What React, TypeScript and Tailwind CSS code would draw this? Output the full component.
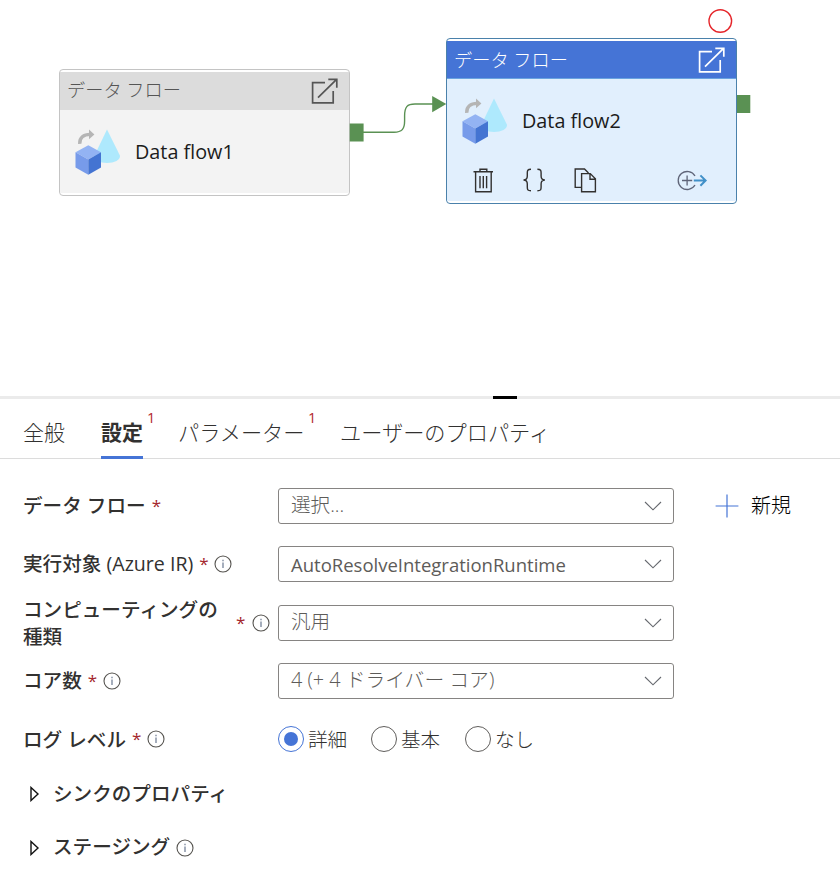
import React from "react";

const DataFlowIcon = () => (
  <svg viewBox="75 129 46 46" className="h-[46px] w-[46px] shrink-0">
    <path d="M107 129.6 L119.9 155.5 C121 160 114 163 107 163 C100 163 93 160 94.5 155.5 Z" fill="#aee9fd" />
    <path d="M88.3 145.2 L101 152.2 L88.3 159.6 L75.5 152.2 Z" fill="#93b3f3" />
    <path d="M75.5 152.2 L88.3 159.6 V174.7 L75.5 167.5 Z" fill="#779bea" />
    <path d="M101 152.2 L88.3 159.6 V174.7 L101 167.5 Z" fill="#4474d2" />
    <path d="M79.7 143.8 C79.4 137.5 83.5 134.3 90.5 134.4" fill="none" stroke="#b5b5b5" strokeWidth="3.4" />
    <path d="M89 129.5 L94.4 134.4 L89 139.3 Z" fill="#b5b5b5" />
  </svg>
);

const OpenIcon = () => (
  <svg viewBox="311 78 28 27" className="h-[27px] w-[28px]" fill="none" stroke="currentColor" strokeWidth="1.7">
    <path d="M325 82.7 H312.6 V102.8 H333.2 V91" />
    <path d="M318 97.7 L336.6 79.4 M328.3 79.3 H336.8 V87.7" />
  </svg>
);

const InfoIcon = () => (
  <svg viewBox="0 0 18 18" className="h-[18px] w-[18px] shrink-0" fill="none">
    <circle cx="9" cy="9" r="8" stroke="#55534f" strokeWidth="1.1" />
    <path d="M9 7.4 V13" stroke="#7f8ba0" strokeWidth="1.4" />
    <path d="M9 4.8 V6.2" stroke="#7f8ba0" strokeWidth="1.4" />
  </svg>
);

const Chevron = () => (
  <svg viewBox="0 0 18 10" className="h-[10px] w-[18px]" fill="none" stroke="#66696f" strokeWidth="1.1">
    <path d="M1 1 L9 8.8 L17 1" />
  </svg>
);

const Star = ({ className = "" }: { className?: string }) => (
  <span className={"w-[9px] text-[17px] font-normal leading-[26px] text-[#a4262c] " + className}>*</span>
);

const Select = ({ text, className = "" }: { text: string; className?: string }) => (
  <div className="flex h-[36px] w-[396px] items-center justify-between rounded-[3px] border border-[#868482] pr-[11px] pl-[12px]">
    <span className={"whitespace-nowrap text-[#5d5b59] " + className}>{text}</span>
    <Chevron />
  </div>
);

const Row = ({ label, children }: { label: React.ReactNode; children: React.ReactNode }) => (
  <div className="flex h-[58.4px] items-center">
    <div className="flex w-[255px] shrink-0 items-center whitespace-nowrap text-[19.6px] font-medium">{label}</div>
    {children}
  </div>
);

const Radio = ({ text, on = false, className = "" }: { text: string; on?: boolean; className?: string }) => (
  <div className={"flex items-center gap-[4px] " + className}>
    <span
      className={
        "flex h-[26px] w-[26px] items-center justify-center rounded-full border " +
        (on ? "border-[#4574d6]" : "border-[#605e5c]")
      }
    >
      {on && <span className="h-[14px] w-[14px] rounded-full bg-[#4574d6]" />}
    </span>
    <span className="pt-[1px] text-[19.6px] font-light">{text}</span>
  </div>
);

const Section = ({ text, info = false }: { text: string; info?: boolean }) => (
  <div className="flex h-[53.5px] items-center pl-[6px]">
    <svg viewBox="0 0 12 16" className="h-[16px] w-[12px]" fill="none" stroke="#111" strokeWidth="1.4">
      <path d="M2 1.5 L9 8 L2 14.5 Z" />
    </svg>
    <span className="ml-[12px] pb-[2px] text-[19.6px] font-medium">{text}</span>
    {info && (
      <span className="ml-[6px]">
        <InfoIcon />
      </span>
    )}
  </div>
);

export default function App() {
  return (
    <div className="flex h-[875px] w-[840px] flex-col overflow-hidden bg-white font-['Open_Sans','Noto_Sans_CJK_JP',sans-serif] text-[19.6px] text-[#323130]">
      <div className="relative h-[396px] shrink-0">
        <div className="absolute top-[69px] left-[59px] flex h-[127px] w-[291px] flex-col rounded-[4px] border-[1.5px] border-[#c4c4c4] bg-white py-[2px]">
          <div className="flex h-[38px] items-center justify-between bg-[#dcdcdc] pr-[10px] pl-[7px] text-[#555]">
            <span className="text-[18.2px] font-light">データ フロー</span>
            <OpenIcon />
          </div>
          <div className="flex grow items-center bg-[#f3f3f3] pl-[15px] text-[#1b1b1b]">
            <DataFlowIcon />
            <span className="ml-[14px] pt-[1px] text-[19.8px]">Data flow1</span>
          </div>
        </div>

        <div className="absolute top-[38px] left-[446px] flex h-[166px] w-[291px] flex-col rounded-[4px] border-[1.5px] border-[#4a81ab] bg-white py-[2px]">
          <div className="flex h-[38px] items-center justify-between border-b border-[#6aa3e0] bg-[#4574d6] pt-[1px] pr-[10px] pl-[7px] text-white">
            <span className="pt-[1px] text-[18.2px] font-light">データ フロー</span>
            <OpenIcon />
          </div>
          <div className="flex grow flex-col bg-[#e1effd] text-[#1b1b1b]">
            <div className="flex h-[84px] items-center pb-[1px] pl-[15px]">
              <DataFlowIcon />
              <span className="ml-[14px] text-[19.8px]">Data flow2</span>
            </div>
            <svg viewBox="447 163 289 34" className="h-[34px] w-[289px]" fill="none" stroke="#323130" strokeWidth="1.4">
              <path d="M473.5 171.8 H493 M480 171.5 V169.3 H486.8 V171.5 M475.6 172 V191.8 H491.2 V172 M480 176 V188.3 M483.3 176 V188.3 M486.6 176 V188.3" />
              <path d="M531 169.3 C527.5 169.3 527.3 170.5 527.3 173 V176 C527.3 178.5 526.5 180 523.5 180 C526.5 180 527.3 181.5 527.3 184 V187 C527.3 189.7 527.5 190.8 531 190.8 M537.4 169.3 C540.9 169.3 541.1 170.5 541.1 173 V176 C541.1 178.5 541.9 180 544.9 180 C541.9 180 541.1 181.5 541.1 184 V187 C541.1 189.7 540.9 190.8 537.4 190.8" />
              <path d="M581 187.4 H575.2 V169 H584.5 L588.5 173 M581.6 173.6 H590.3 L595.4 178.8 V191.8 H581.6 Z M590 173.8 V179.2 H595.2" />
              <path d="M695 176 A9 9 0 1 0 695 185 M682 180.5 H692.2 M687.1 175.4 V185.6" stroke="#5f6478" strokeWidth="1.3" />
              <path d="M693.8 180.5 H705.5 M700.4 175.4 L705.6 180.5 L700.4 185.8" stroke="#4190c8" strokeWidth="2" />
            </svg>
          </div>
        </div>

        <svg viewBox="0 0 840 396" className="absolute inset-0 h-[396px] w-[840px]" fill="none">
          <path d="M363 132.2 H394 C402 132.2 404.6 129 404.6 121 V116 C404.6 107 407 104 415 104 H433" stroke="#5a9153" strokeWidth="1.4" />
          <path d="M432.2 96 L446.3 104 L432.2 112.2 Z" fill="#5a9153" />
          <path d="M349.7 123.4 H363.6 V141.6 H349.7 Z M737 95 H750.3 V113 H737 Z" fill="#5a9153" />
          <circle cx="720.3" cy="21" r="11.3" stroke="#e5252a" strokeWidth="1.4" />
        </svg>
      </div>

      <div className="flex h-[3px] shrink-0 justify-start bg-[#ebebeb] pl-[493px]">
        <div className="h-[3px] w-[24px] bg-black" />
      </div>

      <div className="flex h-[60px] shrink-0 items-stretch border-b border-[#dcdcdc] pl-[23px] text-[21px] font-light">
        <div className="flex w-[78px] items-center pt-[8px]">全般</div>
        <div className="relative flex w-[77px] items-center pt-[8px] font-bold">
          設定
          <span className="absolute top-[9px] left-[46px] text-[14.5px] leading-[20px] font-normal text-[#b3282d]">1</span>
          <span className="absolute bottom-[-1px] left-0 h-[3px] w-[42px] bg-[#4574d6]" />
        </div>
        <div className="relative flex w-[162px] items-center pt-[9px] text-[21.2px]">
          パラメーター
          <span className="absolute top-[9px] left-[130px] text-[14.5px] leading-[20px] font-normal text-[#b3282d]">1</span>
        </div>
        <div className="flex items-center pt-[9px] text-[21.2px]">ユーザーのプロパティ</div>
      </div>

      <div className="flex flex-col pt-[17.6px] pl-[23px]">
        <Row
          label={
            <>
              データ フロー
              <Star className="ml-[6px]" />
            </>
          }
        >
          <Select text="選択..." className="pb-[2px] font-light" />
          <svg viewBox="0 0 24 24" className="ml-[41px] h-[24px] w-[24px]" stroke="#4574d6" strokeWidth="1.2">
            <path d="M12 0.6 V23.4 M0.6 12 H23.4" />
          </svg>
          <span className="ml-[12px] text-[20px] font-light text-black">新規</span>
        </Row>
        <Row
          label={
            <>
              <span>実行対象 (Azure IR)</span>
              <Star className="ml-[6px]" />
              <span className="ml-[6px]">
                <InfoIcon />
              </span>
            </>
          }
        >
          <Select text="AutoResolveIntegrationRuntime" className="pt-[1px] text-[18.5px]" />
        </Row>
        <Row
          label={
            <>
              <span className="w-[213px] leading-[27px]">
                コンピューティングの
                <br />
                種類
              </span>
              <Star />
              <span className="ml-[7px]">
                <InfoIcon />
              </span>
            </>
          }
        >
          <Select text="汎用" className="pb-[2px] font-light" />
        </Row>
        <Row
          label={
            <>
              コア数
              <Star className="ml-[6px]" />
              <span className="ml-[6px]">
                <InfoIcon />
              </span>
            </>
          }
        >
          <Select text="4 (+ 4 ドライバー コア)" className="pb-[2px] text-[19.8px] font-light" />
        </Row>
        <Row
          label={
            <>
              ログ レベル
              <Star className="ml-[6px]" />
              <span className="ml-[6px]">
                <InfoIcon />
              </span>
            </>
          }
        >
          <Radio text="詳細" on className="w-[93px]" />
          <Radio text="基本" className="w-[94px]" />
          <Radio text="なし" />
        </Row>
        <div className="-mt-[1px] flex flex-col">
          <Section text="シンクのプロパティ" />
          <Section text="ステージング" info />
        </div>
      </div>
    </div>
  );
}
